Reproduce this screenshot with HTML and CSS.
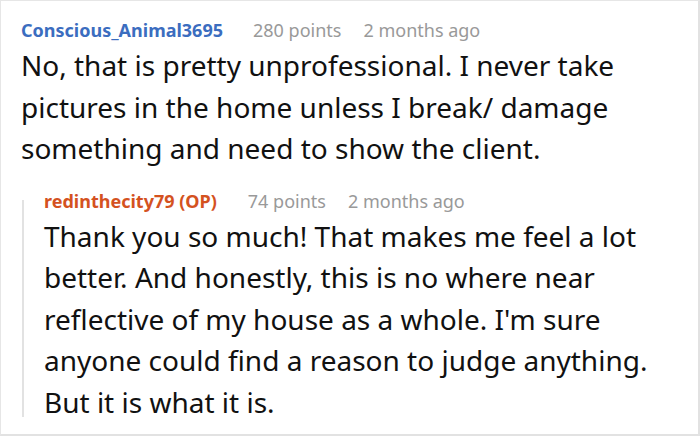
FILE: index.html
```html
<!DOCTYPE html>
<html>
<head>
<meta charset="utf-8">
<link rel="stylesheet" href="styles.css">
</head>
<body>
<div class="frame">
  <div class="comment">
    <div class="meta">
      <span class="user">Conscious_Animal3695</span>
      <span class="points">280 points</span>
      <span class="time">2 months ago</span>
    </div>
    <p class="text">No, that is pretty unprofessional. I never take pictures in the home unless I break/ damage something and need to show the client.</p>
  </div>
  <div class="reply">
    <div class="bar"></div>
    <div class="reply-body">
      <div class="meta">
        <span class="user op">redinthecity79 (OP)</span>
        <span class="points">74 points</span>
        <span class="time">2 months ago</span>
      </div>
      <p class="text">Thank you so much! That makes me feel a lot better. And honestly, this is no where near reflective of my house as a whole. I'm sure anyone could find a reason to judge anything. But it is what it is.</p>
    </div>
  </div>
</div>
</body>
</html>
```
FILE: styles.css
```css
html, body {
  margin: 0;
  padding: 0;
  background: #fff;
}
body {
  font-family: "Noto Sans", "Open Sans", sans-serif;
  color: #111;
}
.frame {
  width: 700px;
  height: 436px;
  box-sizing: border-box;
  border-top: 1px solid #e6e6e6;
  border-left: 1px solid #e6e6e6;
  border-right: 2px solid #e2e2e2;
  border-bottom: 2px solid #e2e2e2;
  padding: 17px 0 0 20px;
  overflow: hidden;
}
.meta {
  display: flex;
  font-size: 18px;
  line-height: 24px;
}
.user {
  font-weight: bold;
  color: #3b6dbf;
}
.user.op {
  color: #d4521f;
}
.points {
  color: #999;
  margin-left: 30px;
}
.time {
  color: #999;
  margin-left: 22px;
}
.text {
  margin: 3px 0 0 0;
  font-size: 28px;
  line-height: 41.5px;
  width: 650px;
}
.reply {
  display: flex;
  margin: 19px 0 0 1px;
}
.bar {
  width: 2px;
  background: #e2e2e2;
  margin: 11px 0 6px 0;
  flex: none;
}
.reply-body {
  padding-left: 20px;
}
.reply-body .text {
  width: 627px;
}
.reply-body .points {
  margin-left: 31px;
}
```
